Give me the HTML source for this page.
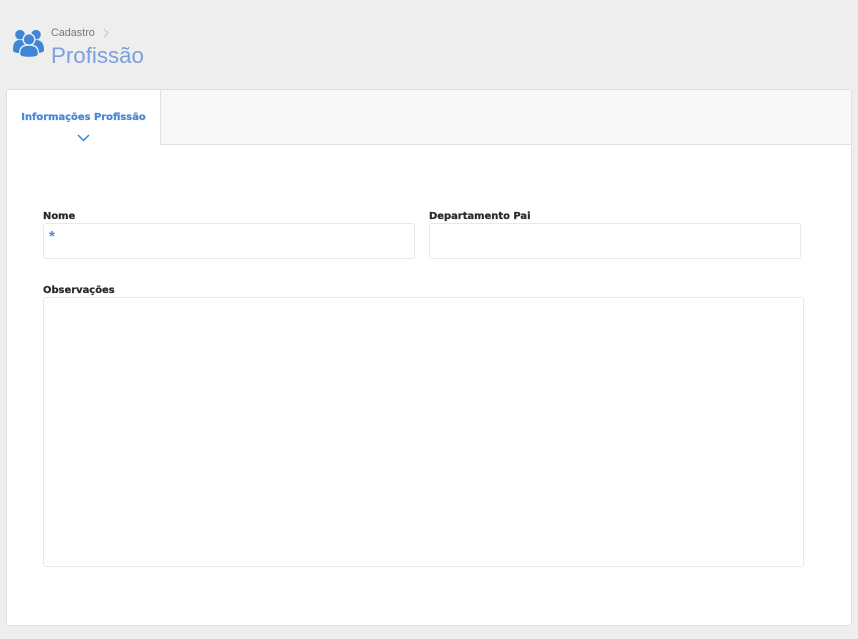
<!DOCTYPE html>
<html lang="pt">
<head>
<meta charset="utf-8">
<title>Profissão</title>
<style>
html,body{margin:0;padding:0;width:858px;height:639px;overflow:hidden;background:#eeeeee;font-family:"DejaVu Sans","Liberation Sans",sans-serif}
*{box-sizing:border-box}
.abs{position:absolute}
.crumb{left:51px;top:26px;font:10.8px/14px "Liberation Sans",sans-serif;color:#777}
.sep{left:103px;top:28px}
.title{left:51px;top:40px;font:22.3px/31px "Liberation Sans",sans-serif;color:#7c9fe0}
.card{left:6px;top:89px;width:846px;height:537px;background:#fff;border:1px solid #dcdfe6;border-radius:3px}
.tabbar{left:7px;top:90px;width:844px;height:55px;background:#f8f8f8;border-bottom:1px solid #dde0ea;border-radius:3px 3px 0 0}
.tab{left:7px;top:90px;width:154px;height:55px;background:#fff;border-right:1px solid #dde0ea;border-radius:3px 0 0 0}
.tabtext{left:7px;top:111px;width:153px;text-align:center;font:bold 9.95px/14px "DejaVu Sans",sans-serif;color:#4a86d8;white-space:nowrap;-webkit-text-stroke:.25px #4a86d8}
.lbl{font:bold 9.95px/14px "DejaVu Sans",sans-serif;color:#2b2b2b;white-space:nowrap;-webkit-text-stroke:.25px #2b2b2b}
.box{background:#fff;border:1px solid #e8e8e8;border-radius:3px}
.star{left:49px;top:229px;font:bold 15px/16px "Liberation Sans",sans-serif;color:#4a86d8}
</style>
</head>
<body>
<svg class="abs" style="left:12px;top:29px" width="33" height="29" viewBox="0 0 33 29">
<g fill="#3f87d6">
<circle cx="8" cy="5.700" r="4.800"/>
<circle cx="24" cy="5.700" r="4.800"/>
<path d="M1 21c0-7 2-10 7-10s8 3 8 10c0 2-3 3-8 3s-7-1-7-3z"/>
<path d="M16 21c0-7 3-10 8-10s8 3 8 10c0 2-3 3-8 3s-8-1-8-3z"/>
</g>
<g fill="#3f87d6" stroke="#eeeeee" stroke-width="1.400">
<circle cx="17" cy="10.500" r="5.800"/>
<path d="M7.500 25c0-6 2.500-9 9.500-9s9.500 3 9.500 9c0 2.500-3 3.500-9.500 3.500s-9.500-1-9.500-3.500z"/>
</g>
</svg>
<div class="abs crumb">Cadastro</div>
<svg class="abs sep" width="7" height="11" viewBox="0 0 7 11"><path d="M1 1l4 4-4 4" fill="none" stroke="#c8c8c8" stroke-width="1.200"/></svg>
<div class="abs title">Profissão</div>

<div class="abs card"></div>
<div class="abs tabbar"></div>
<div class="abs tab"></div>
<div class="abs tabtext">Informações Profissão</div>
<svg class="abs" style="left:77px;top:134px" width="13" height="8" viewBox="0 0 13 8"><path d="M1 1l5.500 5.500L12 1" fill="none" stroke="#2f86e0" stroke-width="1.500"/></svg>

<div class="abs lbl" style="left:43px;top:210px">Nome</div>
<div class="abs box" style="left:43px;top:223px;width:372px;height:36px"></div>
<div class="abs star">*</div>
<div class="abs lbl" style="left:429px;top:210px">Departamento Pai</div>
<div class="abs box" style="left:429px;top:223px;width:372px;height:36px"></div>
<div class="abs lbl" style="left:43px;top:284px">Observações</div>
<div class="abs box" style="left:43px;top:297px;width:761px;height:270px"></div>
</body>
</html>
